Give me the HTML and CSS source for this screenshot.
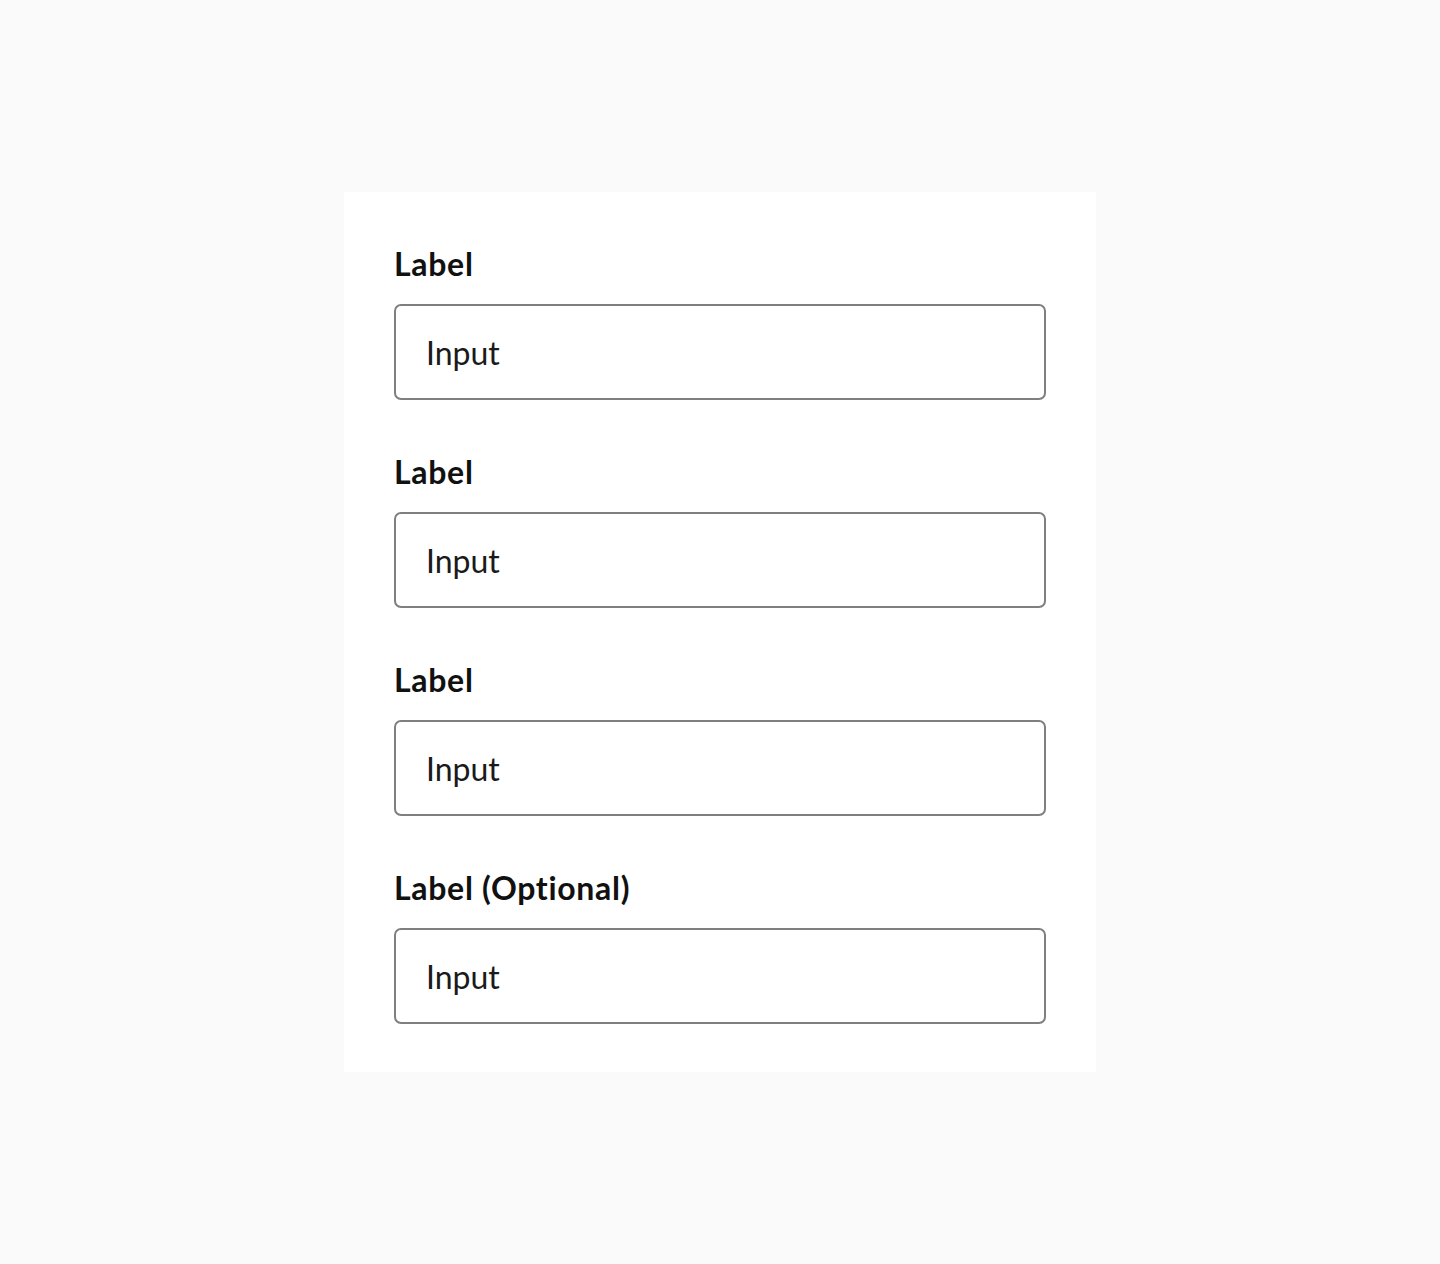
FILE: index.html
```html
<!DOCTYPE html>
<html lang="en">
<head>
<meta charset="UTF-8" />
<meta name="viewport" content="width=device-width, initial-scale=1" />
<title>Form Fields</title>
<link rel="stylesheet" href="styles.css">
</head>
<body>
<div class="page">
  <form class="card">
    <div class="field">
      <label class="field-label" for="f1">Label</label>
      <input class="field-input" id="f1" type="text" value="Input" />
    </div>
    <div class="field">
      <label class="field-label" for="f2">Label</label>
      <input class="field-input" id="f2" type="text" value="Input" />
    </div>
    <div class="field">
      <label class="field-label" for="f3">Label</label>
      <input class="field-input" id="f3" type="text" value="Input" />
    </div>
    <div class="field">
      <label class="field-label" for="f4">Label (Optional)</label>
      <input class="field-input" id="f4" type="text" value="Input" />
    </div>
  </form>
</div>
</body>
</html>
```

FILE: styles.css
```css
body, html {
  margin: 0; padding: 0; background: #fafafa; color: #111;
  font-family: Lato, "Open Sans", Arial, sans-serif;
  font-variant-ligatures: none;
}
.page {
  display: flex; justify-content: center; padding-top: 192px;
}
.card {
  width: 752px; box-sizing: border-box; background: #fff;
  padding: 52px 50px 48px; margin: 0;
  display: flex; flex-direction: column; gap: 52px;
}
.field {
  display: flex; flex-direction: column; gap: 20px;
}
.field-label {
  font-size: 32px; line-height: 40px; font-weight: 700; color: #111;
  letter-spacing: 0.7px;
}
.field-input {
  box-sizing: border-box; width: 100%; height: 96px;
  border: 2px solid #7f7f7f; border-radius: 7px; background: #fff;
  padding: 0 30px; margin: 0;
  font-family: inherit; font-size: 32px; color: #1a1a1a; outline: none;
  font-variant-ligatures: none;
}
```
